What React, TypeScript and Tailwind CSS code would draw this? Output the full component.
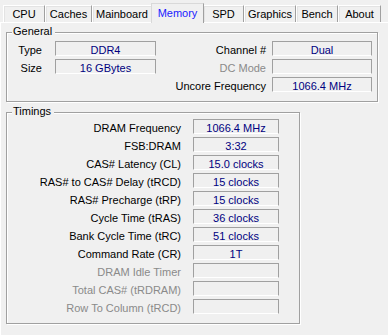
import React from "react";

type Tab = { name: string; cls: string; active?: boolean };

const tabs: Tab[] = [
  { name: "CPU", cls: "w-[42px]" },
  { name: "Caches", cls: "w-[47px]" },
  { name: "Mainboard", cls: "w-[60px]" },
  { name: "Memory", cls: "w-[53px]", active: true },
  { name: "SPD", cls: "w-[41px]" },
  { name: "Graphics", cls: "w-[52px]" },
  { name: "Bench", cls: "w-[42px]" },
  { name: "About", cls: "w-[43px]" },
];

const timings: { label: string; value: string; off?: boolean }[] = [
  { label: "DRAM Frequency", value: "1066.4 MHz" },
  { label: "FSB:DRAM", value: "3:32" },
  { label: "CAS# Latency (CL)", value: "15.0 clocks" },
  { label: "RAS# to CAS# Delay (tRCD)", value: "15 clocks" },
  { label: "RAS# Precharge (tRP)", value: "15 clocks" },
  { label: "Cycle Time (tRAS)", value: "36 clocks" },
  { label: "Bank Cycle Time (tRC)", value: "51 clocks" },
  { label: "Command Rate (CR)", value: "1T" },
  { label: "DRAM Idle Timer", value: "", off: true },
  { label: "Total CAS# (tRDRAM)", value: "", off: true },
  { label: "Row To Column (tRCD)", value: "", off: true },
];

// sunken read-only field
function Field({ value = "" }: { value?: string }) {
  return (
    <div className="h-[15px] border border-[#a0a0a0] border-b-white text-center leading-[17px] text-[#000080] whitespace-nowrap">
      {value}
    </div>
  );
}

function Label({ text, off, pr }: { text: string; off?: boolean; pr: string }) {
  return (
    <div
      className={`h-[15px] text-right leading-[19px] whitespace-nowrap ${pr} ${
        off ? "text-[#8a8a8a]" : "text-black"
      }`}
    >
      {text}
    </div>
  );
}

function Group({ title, className, children }: { title: string; className: string; children: React.ReactNode }) {
  return (
    <div
      className={`relative border border-[#a0a0a0] shadow-[inset_1px_1px_0_#fff,1px_1px_0_#fff] ${className}`}
    >
      <span className="absolute top-[-8px] left-[5px] bg-[#f0f0f0] pl-[1px] pr-[3px] leading-[13px]">
        {title}
      </span>
      {children}
    </div>
  );
}

export default function App() {
  return (
    <div className="w-[388px] h-[335px] overflow-hidden bg-[#f0f0f0] font-['Tahoma','Liberation_Sans',sans-serif] text-[11px] text-black flex flex-col">
      {/* tab strip */}
      <div className="flex items-end h-[22px] pl-[3px]">
        {tabs.map((t) =>
          t.active ? (
            <div
              key={t.name}
              className={`${t.cls} relative z-10 h-[20px] -mb-[1px] -mx-[1px] bg-[#f0f0f0] border border-b-0 border-[#d9d9d9] border-r-[#a0a0a0] text-center leading-[18px] text-[#1a1aff]`}
            >
              {t.name}
            </div>
          ) : (
            <div
              key={t.name}
              className={`${t.cls} h-[17px] border-l border-t border-white border-r border-r-[#a0a0a0] shadow-[inset_1px_1px_0_#e3e3e3] text-center leading-[16px]`}
            >
              {t.name}
            </div>
          )
        )}
      </div>

      {/* tab page */}
      <div className="flex-1 border-t border-l border-white pl-[5px] pt-[9px]">
        <Group title="General" className="w-[372px] h-[70px] pt-[8px] pr-[5px]">
          <div className="grid grid-cols-[48px_101px_116px_100px] gap-y-[3px]">
            <Label text="Type" pr="pr-[13px]" />
            <Field value="DDR4" />
            <Label text="Channel #" pr="pr-[6px]" />
            <Field value="Dual" />

            <Label text="Size" pr="pr-[13px]" />
            <Field value="16 GBytes" />
            <Label text="DC Mode" off pr="pr-[6px]" />
            <Field />

            <div />
            <div />
            <Label text="Uncore Frequency" pr="pr-[6px]" />
            <Field value="1066.4 MHz" />
          </div>
        </Group>

        <Group title="Timings" className="mt-[10px] w-[294px] h-[212px] pt-[6px]">
          <div className="grid grid-cols-[186px_86px] gap-y-[3px]">
            {timings.map((r) => (
              <React.Fragment key={r.label}>
                <Label text={r.label} off={r.off} pr="pr-[12px]" />
                <Field value={r.value} />
              </React.Fragment>
            ))}
          </div>
        </Group>
      </div>
    </div>
  );
}
